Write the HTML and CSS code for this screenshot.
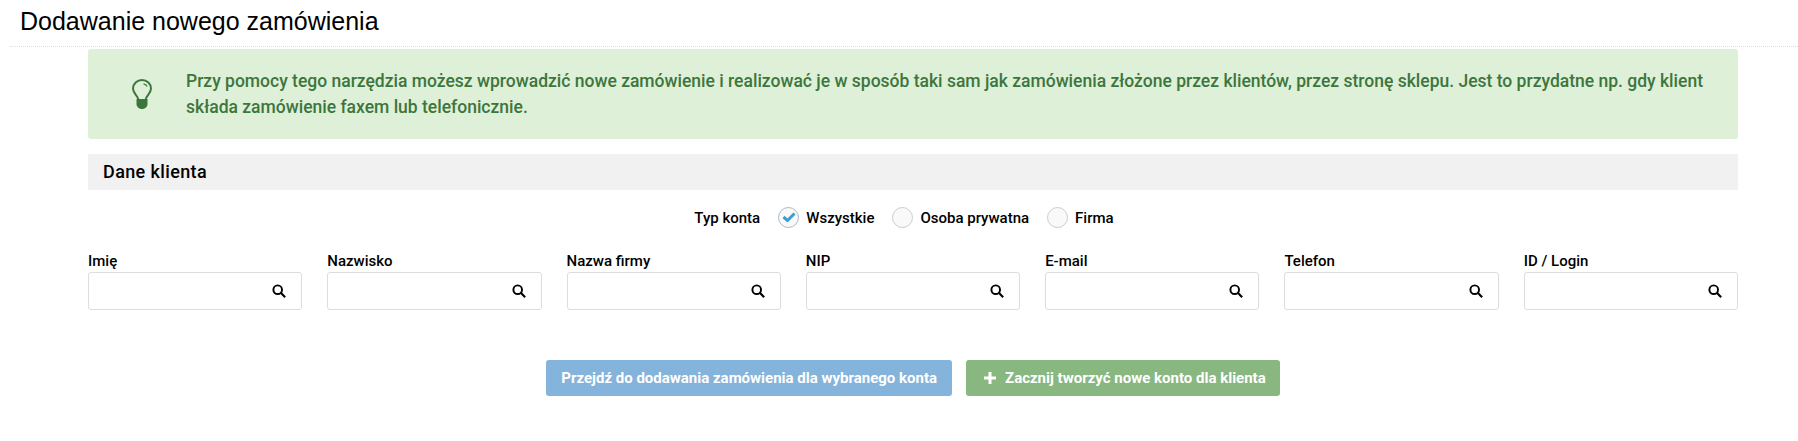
FILE: index.html
```html
<!DOCTYPE html>
<html lang="pl">
<head>
    <meta charset="UTF-8">
    <meta name="viewport" content="width=device-width, initial-scale=1.0">
    <title>Dodawanie nowego zamówienia</title>
    <link rel="stylesheet" href="styles.css">
</head>
<body>
    <div class="page-header">
        <h1>Dodawanie nowego zamówienia</h1>
    </div>

    <div class="container">
        <div class="alert">
            <svg class="alert-icon" width="20" height="30" viewBox="0 0 20 30">
                <path d="M6.4 20.5C6 16.8 1 14.6 1 9.6 1 4.8 5 1 10 1s9 3.8 9 8.6c0 5-5 7.2-5.4 10.9" fill="none" stroke="#3c763d" stroke-width="2"/>
                <path d="M11.5 4.8c1.6.3 2.9 1.2 3.6 2.7" fill="none" stroke="#3c763d" stroke-width="1.3"/>
                <path d="M4.5 20h11v5c0 2.8-2.4 5-5.500 5s-5.500-2.200-5.500-5z" fill="#3c763d"/>
            </svg>
            <p>Przy pomocy tego narzędzia możesz wprowadzić nowe zamówienie i realizować je w sposób taki sam jak zamówienia złożone przez klientów, przez stronę sklepu. Jest to przydatne np. gdy klient składa zamówienie faxem lub telefonicznie.</p>
        </div>

        <h2 class="section-title">Dane klienta</h2>

        <div class="account-type">
            <span class="account-label">Typ konta</span>
            <label class="radio">
                <span class="radio-mark radio-checked">
                    <svg width="14" height="11" viewBox="0 0 14 11"><path d="M1.500 5l4 3.500 7-7" fill="none" stroke="#3c9fd0" stroke-width="3"/></svg>
                </span>
                Wszystkie
            </label>
            <label class="radio"><span class="radio-mark"></span>Osoba prywatna</label>
            <label class="radio"><span class="radio-mark"></span>Firma</label>
        </div>

        <div class="search-fields">
            <div class="field">
                <label>Imię</label>
                <div class="input-box"><svg class="search-icon" width="14" height="14" viewBox="0 0 13 13"><circle cx="5.300" cy="5.300" r="4" fill="none" stroke="#000" stroke-width="1.800"/><path d="M8.200 8.200l4 4" stroke="#000" stroke-width="2"/></svg></div>
            </div>
            <div class="field">
                <label>Nazwisko</label>
                <div class="input-box"><svg class="search-icon" width="14" height="14" viewBox="0 0 13 13"><circle cx="5.300" cy="5.300" r="4" fill="none" stroke="#000" stroke-width="1.800"/><path d="M8.200 8.200l4 4" stroke="#000" stroke-width="2"/></svg></div>
            </div>
            <div class="field">
                <label>Nazwa firmy</label>
                <div class="input-box"><svg class="search-icon" width="14" height="14" viewBox="0 0 13 13"><circle cx="5.300" cy="5.300" r="4" fill="none" stroke="#000" stroke-width="1.800"/><path d="M8.200 8.200l4 4" stroke="#000" stroke-width="2"/></svg></div>
            </div>
            <div class="field">
                <label>NIP</label>
                <div class="input-box"><svg class="search-icon" width="14" height="14" viewBox="0 0 13 13"><circle cx="5.300" cy="5.300" r="4" fill="none" stroke="#000" stroke-width="1.800"/><path d="M8.200 8.200l4 4" stroke="#000" stroke-width="2"/></svg></div>
            </div>
            <div class="field">
                <label>E-mail</label>
                <div class="input-box"><svg class="search-icon" width="14" height="14" viewBox="0 0 13 13"><circle cx="5.300" cy="5.300" r="4" fill="none" stroke="#000" stroke-width="1.800"/><path d="M8.200 8.200l4 4" stroke="#000" stroke-width="2"/></svg></div>
            </div>
            <div class="field">
                <label>Telefon</label>
                <div class="input-box"><svg class="search-icon" width="14" height="14" viewBox="0 0 13 13"><circle cx="5.300" cy="5.300" r="4" fill="none" stroke="#000" stroke-width="1.800"/><path d="M8.200 8.200l4 4" stroke="#000" stroke-width="2"/></svg></div>
            </div>
            <div class="field">
                <label>ID / Login</label>
                <div class="input-box"><svg class="search-icon" width="14" height="14" viewBox="0 0 13 13"><circle cx="5.300" cy="5.300" r="4" fill="none" stroke="#000" stroke-width="1.800"/><path d="M8.200 8.200l4 4" stroke="#000" stroke-width="2"/></svg></div>
            </div>
        </div>

        <div class="actions">
            <button class="btn btn-blue">Przejdź do dodawania zamówienia dla wybranego konta</button>
            <button class="btn btn-green">
                <svg width="12" height="12" viewBox="0 0 12 12"><path d="M4.500 0h3v4.500H12v3H7.500V12h-3V7.500H0v-3h4.500z" fill="#fff"/></svg>
                Zacznij tworzyć nowe konto dla klienta
            </button>
        </div>
    </div>
</body>
</html>
```

FILE: styles.css
```css
body {
    margin: 0;
    background-color: #fff;
    color: #000;
    font-family: Roboto, Arial, sans-serif;
}
.page-header {
    height: 46px;
    margin-left: 10px;
    border-bottom: 1px dotted #ddd;
}
h1 {
    margin: 0;
    padding: 7px 0 0 10px;
    font-family: "Liberation Sans", Arial, sans-serif;
    font-size: 25px;
    font-weight: 400;
    line-height: 28px;
}
.container {
    margin: 2px 60px 0 88px;
}
.alert {
    display: flex;
    align-items: center;
    height: 90px;
    background-color: #dff0d8;
    border-radius: 3px;
    color: #3c763d;
}
.alert-icon {
    flex: none;
    margin: 0 34px 0 44px;
}
.alert p {
    margin: 0;
    font-size: 17.5px;
    font-weight: 500;
    line-height: 26px;
}
.section-title {
    height: 36px;
    margin: 15px 0 0;
    padding-left: 15px;
    background-color: #f1f1f1;
    font-size: 18px;
    font-weight: 500;
    letter-spacing: 0.38px;
    line-height: 36px;
}
.account-type {
    display: flex;
    justify-content: center;
    align-items: center;
    gap: 18px;
    margin-top: 17px;
    padding-right: 18px;
    font-size: 15px;
    font-weight: 500;
}
.radio {
    display: flex;
    align-items: center;
    gap: 7px;
}
.radio-mark {
    display: flex;
    justify-content: center;
    align-items: center;
    box-sizing: border-box;
    width: 21px;
    height: 21px;
    background-color: #f9f9f9;
    border: 1px solid #ccc;
    border-radius: 50%;
}
.radio-checked {
    border-color: #a9b9c6;
}
.search-fields {
    display: grid;
    grid-template-columns: repeat(7, 1fr);
    gap: 25px;
    margin-top: 24px;
}
.field label {
    display: block;
    height: 20px;
    font-size: 15px;
    font-weight: 500;
    line-height: 19px;
}
.input-box {
    display: flex;
    justify-content: flex-end;
    align-items: center;
    box-sizing: border-box;
    height: 38px;
    padding-right: 15px;
    border: 1px solid #ddd;
    border-radius: 3px;
}
.actions {
    display: flex;
    justify-content: center;
    gap: 14px;
    margin-top: 50px;
}
.btn {
    display: flex;
    align-items: center;
    justify-content: center;
    gap: 9px;
    height: 36px;
    padding: 0 15px;
    border: none;
    border-radius: 3px;
    color: #fff;
    font-family: Roboto, Arial, sans-serif;
    font-size: 15px;
    font-weight: 700;
}
.btn-blue {
    background-color: #84b3dc;
}
.btn-green {
    padding: 0 14px 0 18px;
    background-color: #88b77f;
}
```
